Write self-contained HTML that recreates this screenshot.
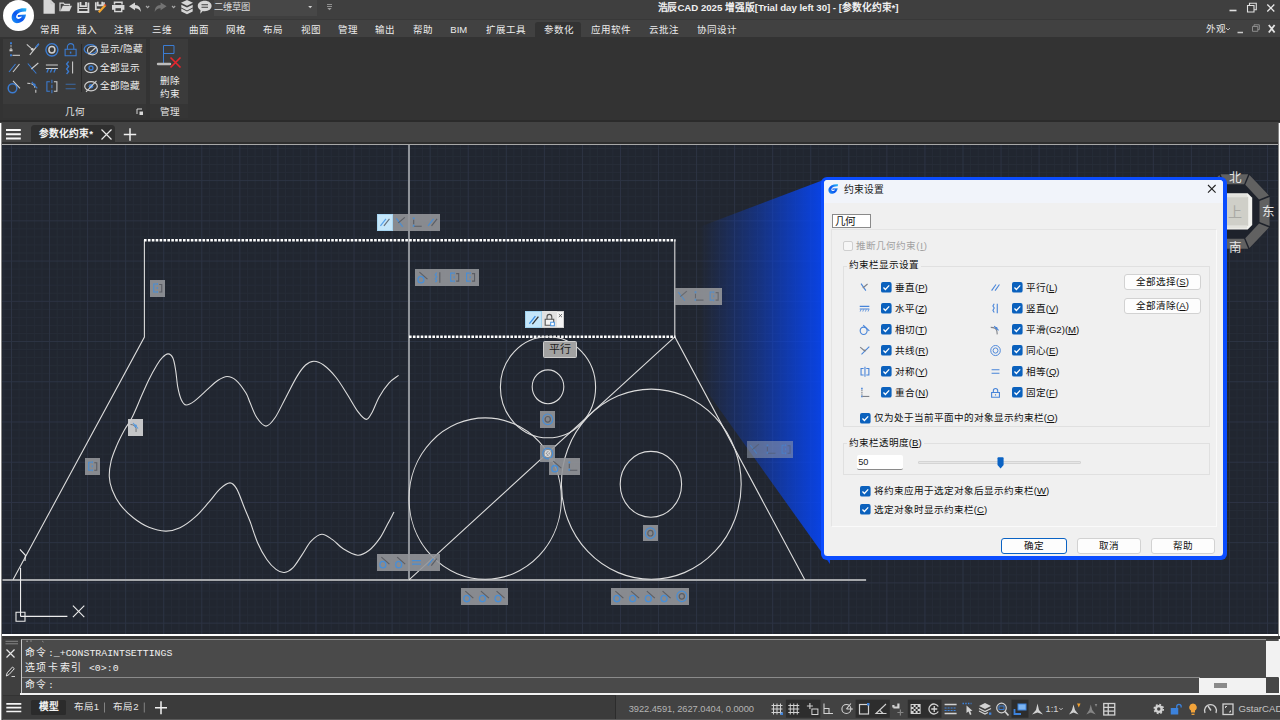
<!DOCTYPE html>
<html lang="zh-CN"><head><meta charset="utf-8"><title>GstarCAD</title>
<style>
*{box-sizing:border-box;margin:0;padding:0}
html,body{width:1280px;height:720px;overflow:hidden;background:#3f3f3f}
body{position:relative;font-family:"Liberation Sans",sans-serif;font-size:9.6px;color:#e6e6e6}
.a{position:absolute}
.t{position:absolute;white-space:nowrap;line-height:12px;height:12px}
svg{position:absolute;overflow:visible}
#title{left:0;top:0;width:1280px;height:19px;background:#3f3f3f}
#tabs{left:0;top:19px;width:1280px;height:18px;background:#414141;border-top:1px solid #383838}
#ribbon{left:0;top:37px;width:1280px;height:84px;background:#333}
#rline{left:0;top:120px;width:1280px;height:2px;background:#2b2b2b}
#doctabs{left:0;top:122px;width:1280px;height:20px;background:#434343}
#dline{left:0;top:142px;width:1280px;height:2px;background:#2e2e2e}
#dline2{left:0;top:143.8px;width:1280px;height:1.4px;background:#a8a8a8}
#canvas{left:2px;top:145px;width:1277px;height:489.2px;background-color:#212630;overflow:hidden}
#lstripe{left:0;top:123px;width:2px;height:597px;background:linear-gradient(to right,#fff 0,#fff 1px,#858585 1px,#858585 2px)}
#rstripe{left:1278px;top:123px;width:2px;height:572px;background:linear-gradient(to right,#858585 0,#858585 1px,#fff 1px,#fff 2px)}
#cline{left:0;top:634px;width:1280px;height:2.2px;background:#fff}
#cmd{left:2.5px;top:636.2px;width:1277.5px;height:59px;background:#4a4a4a}
#status{left:2.5px;top:695px;width:1277.5px;height:25px;background:#424242}
.bd{position:absolute;background:rgba(160,163,168,.82)}
</style></head><body>
<div class="a" id="title"></div>
<div class="a" id="tabs"></div>
<div class="a" id="ribbon"></div>
<div class="a" id="rline"></div>
<div class="a" id="doctabs"></div>
<div class="a" id="dline"></div>
<div class="a" id="dline2"></div>
<div class="a" id="canvas"><svg width="1277" height="490" style="left:0;top:0">
<path d="M1.89 0V489.2M17.11 0V489.2M24.72 0V489.2M32.34 0V489.2M39.95 0V489.2M55.17 0V489.2M62.78 0V489.2M70.40 0V489.2M78.01 0V489.2M93.23 0V489.2M100.84 0V489.2M108.46 0V489.2M116.07 0V489.2M131.29 0V489.2M138.90 0V489.2M146.52 0V489.2M154.13 0V489.2M169.35 0V489.2M176.96 0V489.2M184.58 0V489.2M192.19 0V489.2M207.41 0V489.2M215.02 0V489.2M222.64 0V489.2M230.25 0V489.2M245.47 0V489.2M253.08 0V489.2M260.70 0V489.2M268.31 0V489.2M283.53 0V489.2M291.14 0V489.2M298.76 0V489.2M306.37 0V489.2M321.59 0V489.2M329.20 0V489.2M336.82 0V489.2M344.43 0V489.2M359.65 0V489.2M367.26 0V489.2M374.88 0V489.2M382.49 0V489.2M397.71 0V489.2M405.32 0V489.2M412.94 0V489.2M420.55 0V489.2M435.77 0V489.2M443.38 0V489.2M451.00 0V489.2M458.61 0V489.2M473.83 0V489.2M481.44 0V489.2M489.06 0V489.2M496.67 0V489.2M511.89 0V489.2M519.50 0V489.2M527.12 0V489.2M534.73 0V489.2M549.95 0V489.2M557.56 0V489.2M565.18 0V489.2M572.79 0V489.2M588.01 0V489.2M595.62 0V489.2M603.24 0V489.2M610.85 0V489.2M626.07 0V489.2M633.68 0V489.2M641.30 0V489.2M648.91 0V489.2M664.13 0V489.2M671.74 0V489.2M679.36 0V489.2M686.97 0V489.2M702.19 0V489.2M709.80 0V489.2M717.42 0V489.2M725.03 0V489.2M740.25 0V489.2M747.86 0V489.2M755.48 0V489.2M763.09 0V489.2M778.31 0V489.2M785.92 0V489.2M793.54 0V489.2M801.15 0V489.2M816.37 0V489.2M823.98 0V489.2M831.60 0V489.2M839.21 0V489.2M854.43 0V489.2M862.04 0V489.2M869.66 0V489.2M877.27 0V489.2M892.49 0V489.2M900.10 0V489.2M907.72 0V489.2M915.33 0V489.2M930.55 0V489.2M938.16 0V489.2M945.78 0V489.2M953.39 0V489.2M968.61 0V489.2M976.22 0V489.2M983.84 0V489.2M991.45 0V489.2M1006.67 0V489.2M1014.28 0V489.2M1021.90 0V489.2M1029.51 0V489.2M1044.73 0V489.2M1052.34 0V489.2M1059.96 0V489.2M1067.57 0V489.2M1082.79 0V489.2M1090.40 0V489.2M1098.02 0V489.2M1105.63 0V489.2M1120.85 0V489.2M1128.46 0V489.2M1136.08 0V489.2M1143.69 0V489.2M1158.91 0V489.2M1166.52 0V489.2M1174.14 0V489.2M1181.75 0V489.2M1196.97 0V489.2M1204.58 0V489.2M1212.20 0V489.2M1219.81 0V489.2M1235.03 0V489.2M1242.64 0V489.2M1250.26 0V489.2M1257.87 0V489.2M1273.09 0V489.2M0 3.42H1277M0 11.46H1277M0 19.51H1277M0 27.55H1277M0 43.65H1277M0 51.69H1277M0 59.74H1277M0 67.78H1277M0 83.88H1277M0 91.92H1277M0 99.97H1277M0 108.01H1277M0 124.11H1277M0 132.15H1277M0 140.20H1277M0 148.24H1277M0 164.34H1277M0 172.38H1277M0 180.43H1277M0 188.47H1277M0 204.57H1277M0 212.61H1277M0 220.66H1277M0 228.70H1277M0 244.80H1277M0 252.84H1277M0 260.89H1277M0 268.93H1277M0 285.03H1277M0 293.07H1277M0 301.12H1277M0 309.16H1277M0 325.26H1277M0 333.30H1277M0 341.35H1277M0 349.39H1277M0 365.49H1277M0 373.53H1277M0 381.58H1277M0 389.62H1277M0 405.72H1277M0 413.76H1277M0 421.81H1277M0 429.85H1277M0 445.95H1277M0 453.99H1277M0 462.04H1277M0 470.08H1277M0 486.18H1277" stroke="#262c37" stroke-width="1" fill="none"/>
<path d="M9.50 0V489.2M47.56 0V489.2M85.62 0V489.2M123.68 0V489.2M161.74 0V489.2M199.80 0V489.2M237.86 0V489.2M275.92 0V489.2M313.98 0V489.2M352.04 0V489.2M390.10 0V489.2M428.16 0V489.2M466.22 0V489.2M504.28 0V489.2M542.34 0V489.2M580.40 0V489.2M618.46 0V489.2M656.52 0V489.2M694.58 0V489.2M732.64 0V489.2M770.70 0V489.2M808.76 0V489.2M846.82 0V489.2M884.88 0V489.2M922.94 0V489.2M961.00 0V489.2M999.06 0V489.2M1037.12 0V489.2M1075.18 0V489.2M1113.24 0V489.2M1151.30 0V489.2M1189.36 0V489.2M1227.42 0V489.2M1265.48 0V489.2M0 35.60H1277M0 75.83H1277M0 116.06H1277M0 156.29H1277M0 196.52H1277M0 236.75H1277M0 276.98H1277M0 317.21H1277M0 357.44H1277M0 397.67H1277M0 437.90H1277M0 478.13H1277" stroke="#2d3444" stroke-width="1" fill="none"/>
</svg></div>
<svg width="1280" height="720" style="left:0;top:0" fill="none" stroke="#dcdcdc" stroke-width="1.1">
<path d="M409 145V579.900" stroke="#8f9399" stroke-width="2"/>
<path d="M2.500 580H866.100" stroke="#a6a8ab" stroke-width="1.900"/>
<path d="M144.400 240V337L13 579.800M674.800 240V336.800L804.800 579.800M409 579.800L674.800 336.800"/>
<path d="M144 240.200H675.500" stroke="#fff" stroke-width="2.400" stroke-dasharray="2.600 1.300"/>
<path d="M409 336.800H675.500" stroke="#fff" stroke-width="2.400" stroke-dasharray="2.600 1.300"/>
<ellipse cx="485.2" cy="498.6" rx="76.2" ry="80.7"/>
<ellipse cx="651.3" cy="484.2" rx="89.9" ry="95.1"/>
<ellipse cx="650.9" cy="484.3" rx="30.7" ry="32.9"/>
<ellipse cx="548" cy="387.3" rx="47.6" ry="50.5"/>
<ellipse cx="548" cy="386.800" rx="15.800" ry="16.900"/>
<path d="M398.6 375.4 C397.0 376.7 392.1 379.5 388.9 383.1 C385.7 386.7 382.0 392.0 379.2 396.9 C376.4 401.8 374.3 408.4 372.2 412.2 C370.1 415.9 368.7 419.4 366.4 419.4 C364.1 419.4 361.5 416.4 358.3 412.2 C355.1 408.0 350.9 400.0 347.2 394.2 C343.5 388.4 340.0 382.4 336.1 377.5 C332.2 372.6 327.3 367.7 323.6 365.0 C319.9 362.3 316.9 361.3 313.9 361.3 C310.9 361.3 308.4 362.5 305.6 365.0 C302.8 367.5 300.4 370.8 297.2 376.1 C293.9 381.4 289.8 389.9 286.1 396.9 C282.4 403.8 278.4 412.9 275.0 417.8 C271.6 422.7 269.0 426.1 266.0 426.1 C263.0 426.1 259.6 421.7 256.9 417.8 C254.2 413.9 251.8 406.7 250.0 402.5 C248.2 398.3 248.1 396.5 245.8 392.8 C243.5 389.1 239.2 383.0 236.1 380.3 C233.0 377.6 230.1 376.5 227.1 376.5 C224.1 376.5 221.2 378.3 218.1 380.3 C215.0 382.3 212.2 385.1 208.3 388.6 C204.4 392.1 198.1 398.4 194.4 401.1 C190.7 403.8 188.3 405.2 186.1 405.0 C183.9 404.8 182.7 402.7 181.3 399.7 C179.9 396.7 178.7 392.0 177.8 387.2 C176.9 382.4 176.5 375.5 175.7 370.6 C174.9 365.8 174.2 360.9 172.9 358.1 C171.6 355.3 169.8 354.0 168.1 353.9 C166.4 353.8 164.4 355.5 162.5 357.4 C160.6 359.2 159.2 361.2 156.9 365.0 C154.6 368.8 151.1 375.2 148.6 380.3 C146.1 385.4 144.5 389.4 141.7 395.6 C138.9 401.9 134.8 412.1 131.9 417.8 C129.0 423.5 126.9 425.4 124.4 430.0 C121.9 434.6 118.9 440.4 116.7 445.6 C114.5 450.8 112.3 455.9 111.1 461.1 C109.9 466.3 109.1 471.9 109.3 476.7 C109.5 481.5 110.4 485.4 112.2 490.0 C114.0 494.6 116.5 499.8 120.0 504.4 C123.5 509.0 128.5 514.0 133.3 517.8 C138.1 521.6 143.5 525.1 148.9 527.3 C154.3 529.5 160.4 531.0 165.6 531.1 C170.8 531.2 175.0 530.2 180.0 527.8 C185.0 525.4 190.8 521.0 195.6 516.7 C200.4 512.4 204.8 506.8 208.9 502.2 C213.0 497.6 216.5 492.1 220.0 488.9 C223.5 485.7 227.2 482.9 230.0 482.9 C232.8 482.9 234.3 484.8 236.7 488.9 C239.1 493.0 242.2 502.4 244.4 507.8 C246.6 513.2 247.8 515.5 250.0 521.3 C252.2 527.1 254.8 536.3 257.6 542.7 C260.4 549.1 263.7 555.0 266.8 559.5 C269.9 564.0 273.1 567.2 276.0 569.4 C278.9 571.6 281.6 572.8 284.4 572.5 C287.2 572.2 289.9 570.8 292.8 567.9 C295.7 565.0 298.9 559.4 302.0 554.9 C305.1 550.4 307.8 544.5 311.1 541.1 C314.4 537.7 318.2 534.5 321.8 534.2 C325.4 534.0 328.9 537.2 332.5 539.6 C336.1 542.0 339.0 546.2 343.2 548.8 C347.4 551.4 353.4 555.0 357.7 555.2 C362.0 555.5 365.5 553.1 369.2 550.3 C372.9 547.4 376.8 542.4 379.9 538.1 C382.9 533.8 385.1 528.6 387.5 524.3 C389.9 520.0 392.9 514.1 394.0 512.1"/>
<path d="M20.550 616.400V567.800M20.550 616.400H67.400M16 612.200h9v9h-9zM19.900 549.400L25.400 555.300L25 561M72.900 605.700L84.300 617.100M84.300 605.700L72.900 617.100" stroke="#ececec" stroke-width="1.100"/>
</svg>
<div class="a" style="left:690px;top:170px;width:140px;height:395px;background:linear-gradient(to right,rgba(6,70,250,0) 7%,rgba(6,70,250,.4) 50%,rgba(6,70,250,.87) 93%);clip-path:polygon(100% 7.5px,0 60.5px,0 198px,100% 394px)"></div>
<div class="bd" style="left:376.5px;top:214px;width:63.50px;height:17.25px;background:rgba(148,150,154,.9)"><div class="a" style="left:0;top:0;width:16.4px;height:100%;background:#c4e6fa;border:1px solid #a8d6f2"></div><svg width="63.50" height="17.25" style="left:0;top:0" fill="none" stroke-width="1.1" opacity="0.8"><g transform="translate(-0.06 0.32)"><path d="M3.5 11.5L9 4.5" stroke="#3a8fe6"/><path d="M7 11.5L12.5 4.5" stroke="#50535a"/></g><g transform="translate(15.81 0.32)"><path d="M3.5 4L10 12.5" stroke="#3a8fe6"/><path d="M12 3L5.5 8.5" stroke="#50535a"/></g><g transform="translate(31.69 0.32)"><path d="M5 3.2V5M5 10.5V12.5" stroke="#3a8fe6" stroke-width="1.8"/><path d="M5 5.5V10M5.5 12H13" stroke="#50535a"/></g><g transform="translate(47.56 0.32)"><path d="M3.5 11.5L9 4.5" stroke="#3a8fe6"/><path d="M7 11.5L12.5 4.5" stroke="#50535a"/></g></svg></div>
<div class="bd" style="left:149.8px;top:280px;width:15.50px;height:16.70px;background:rgba(148,150,154,.9)"><svg width="15.50" height="16.70" style="left:0;top:0" fill="none" stroke-width="1.1" opacity="0.8"><g transform="translate(-0.25 0.05)"><path d="M6.5 4H4V12H6.5M7.5 3V5M7.5 7V9M7.5 11V13" stroke="#3a8fe6"/><path d="M9.5 4.5H12V12H9.5" stroke="#50535a"/></g></svg></div>
<div class="bd" style="left:415.25px;top:269.4px;width:63.50px;height:16.85px;background:rgba(148,150,154,.9)"><svg width="63.50" height="16.85" style="left:0;top:0" fill="none" stroke-width="1.1" opacity="0.8"><g transform="translate(-0.06 0.13)"><ellipse cx="6" cy="10.5" rx="3" ry="3.2" stroke="#3a8fe6" stroke-width="1.3"/><path d="M4.5 3L12.5 10" stroke="#50535a"/></g><g transform="translate(15.81 0.13)"><path d="M6 3.5L4.5 5.5L6 7.5L4.5 9.5L6 11.5L4.5 13" stroke="#3a8fe6"/><path d="M9 3V13.5" stroke="#50535a"/></g><g transform="translate(31.69 0.13)"><path d="M6.5 4H4V12H6.5M7.5 3V5M7.5 7V9M7.5 11V13" stroke="#3a8fe6"/><path d="M9.5 4.5H12V12H9.5" stroke="#50535a"/></g><g transform="translate(47.56 0.13)"><path d="M6.5 4H4V12H6.5M7.5 3V5M7.5 7V9M7.5 11V13" stroke="#3a8fe6"/><path d="M9.5 4.5H12V12H9.5" stroke="#50535a"/></g></svg></div>
<div class="bd" style="left:675px;top:288.4px;width:47.00px;height:16.90px;background:rgba(148,150,154,.9)"><svg width="47.00" height="16.90" style="left:0;top:0" fill="none" stroke-width="1.1" opacity="0.6"><g transform="translate(-0.17 0.15)"><path d="M3.5 4L10 12.5" stroke="#3a8fe6"/><path d="M12 3L5.5 8.5" stroke="#50535a"/></g><g transform="translate(15.50 0.15)"><path d="M5 3.2V5M5 10.5V12.5" stroke="#3a8fe6" stroke-width="1.8"/><path d="M5 5.5V10M5.5 12H13" stroke="#50535a"/></g><g transform="translate(31.17 0.15)"><path d="M6.5 4H4V12H6.5M7.5 3V5M7.5 7V9M7.5 11V13" stroke="#3a8fe6"/><path d="M9.5 4.5H12V12H9.5" stroke="#50535a"/></g></svg></div>
<div class="bd" style="left:128.2px;top:419px;width:15.10px;height:16.60px;background:rgba(205,206,208,.95)"><svg width="15.10" height="16.60" style="left:0;top:0" fill="none" stroke-width="1.1" opacity="0.8"><g transform="translate(-0.45 0.00)"><path d="M3 5.5C6 5.5 8 7 8.5 9.5L8.5 13" stroke="#50535a" stroke-width=".9"/><path d="M5.5 4L10.5 9.5" stroke="#3a8fe6"/><circle cx="8" cy="7" r="1.4" fill="#3a8fe6" stroke="none"/></g></svg></div>
<div class="bd" style="left:84.5px;top:457.6px;width:15.50px;height:17.00px;background:rgba(148,150,154,.9)"><svg width="15.50" height="17.00" style="left:0;top:0" fill="none" stroke-width="1.1" opacity="0.8"><g transform="translate(-0.25 0.20)"><path d="M6.5 4H4V12H6.5M7.5 3V5M7.5 7V9M7.5 11V13" stroke="#3a8fe6"/><path d="M9.5 4.5H12V12H9.5" stroke="#50535a"/></g></svg></div>
<div class="bd" style="left:376.5px;top:554.4px;width:63.20px;height:16.90px;background:rgba(148,150,154,.9)"><svg width="63.20" height="16.90" style="left:0;top:0" fill="none" stroke-width="1.1" opacity="0.8"><g transform="translate(-0.10 0.15)"><ellipse cx="6" cy="10.5" rx="3" ry="3.2" stroke="#3a8fe6" stroke-width="1.3"/><path d="M4.5 3L12.5 10" stroke="#50535a"/></g><g transform="translate(15.70 0.15)"><ellipse cx="6" cy="10.5" rx="3" ry="3.2" stroke="#3a8fe6" stroke-width="1.3"/><path d="M4.5 3L12.5 10" stroke="#50535a"/></g><g transform="translate(31.50 0.15)"><path d="M3.5 6.5H12.5M3.5 10H12.5" stroke="#3a8fe6"/></g><g transform="translate(47.30 0.15)"><path d="M3.5 11.5L9 4.5" stroke="#3a8fe6"/><path d="M7 11.5L12.5 4.5" stroke="#50535a"/></g></svg></div>
<div class="bd" style="left:539.7px;top:411.4px;width:15.50px;height:16.60px;background:rgba(148,150,154,.9)"><svg width="15.50" height="16.60" style="left:0;top:0" fill="none" stroke-width="1.1" opacity="0.8"><g transform="translate(-0.25 0.00)"><ellipse cx="8" cy="8.3" rx="5" ry="5.3" stroke="#3a8fe6" stroke-width="1.2"/><ellipse cx="8" cy="8.3" rx="2.6" ry="2.8" stroke="#50535a" stroke-width="1.2"/></g></svg></div>
<div class="bd" style="left:539.7px;top:445px;width:15.50px;height:17.00px;background:rgba(148,150,154,.9)"><svg width="15.50" height="17.00" style="left:0;top:0" fill="none" stroke-width="1.1" opacity="0.8"><g transform="translate(-0.25 0.20)"><ellipse cx="8" cy="8.3" rx="5" ry="5.3" stroke="#3a8fe6" stroke-width="1.2"/><ellipse cx="8" cy="8.3" rx="2.6" ry="2.8" stroke="#eee" stroke-width="1.2"/><path d="M5.5 5.5L10.5 11M10.5 5.5L5.5 11" stroke="#eee" stroke-width="1"/></g></svg></div>
<div class="bd" style="left:548.7px;top:457.6px;width:31.10px;height:17.00px;background:rgba(148,150,154,.9)"><svg width="31.10" height="17.00" style="left:0;top:0" fill="none" stroke-width="1.1" opacity="0.8"><g transform="translate(-0.23 0.20)"><ellipse cx="6" cy="10.5" rx="3" ry="3.2" stroke="#3a8fe6" stroke-width="1.3"/><path d="M4.5 3L12.5 10" stroke="#50535a"/></g><g transform="translate(15.32 0.20)"><path d="M5 3.2V5M5 10.5V12.5" stroke="#3a8fe6" stroke-width="1.8"/><path d="M5 5.5V10M5.5 12H13" stroke="#50535a"/></g></svg></div>
<div class="bd" style="left:746.6px;top:440.6px;width:46.90px;height:17.00px;background:rgba(150,158,175,.55)"><svg width="46.90" height="17.00" style="left:0;top:0" fill="none" stroke-width="1.1" opacity="0.45"><g transform="translate(-0.18 0.20)"><path d="M3.5 4L10 12.5" stroke="#3a8fe6"/><path d="M12 3L5.5 8.5" stroke="#50535a"/></g><g transform="translate(15.45 0.20)"><path d="M5 3.2V5M5 10.5V12.5" stroke="#3a8fe6" stroke-width="1.8"/><path d="M5 5.5V10M5.5 12H13" stroke="#50535a"/></g><g transform="translate(31.08 0.20)"><path d="M6.5 4H4V12H6.5M7.5 3V5M7.5 7V9M7.5 11V13" stroke="#3a8fe6"/><path d="M9.5 4.5H12V12H9.5" stroke="#50535a"/></g></svg></div>
<div class="bd" style="left:643px;top:525px;width:14.80px;height:16.40px;background:rgba(148,150,154,.9)"><svg width="14.80" height="16.40" style="left:0;top:0" fill="none" stroke-width="1.1" opacity="0.8"><g transform="translate(-0.60 -0.10)"><ellipse cx="8" cy="8.3" rx="5" ry="5.3" stroke="#3a8fe6" stroke-width="1.2"/><ellipse cx="8" cy="8.3" rx="2.6" ry="2.8" stroke="#50535a" stroke-width="1.2"/></g></svg></div>
<div class="bd" style="left:461.4px;top:588.3px;width:46.90px;height:16.70px;background:rgba(148,150,154,.9)"><svg width="46.90" height="16.70" style="left:0;top:0" fill="none" stroke-width="1.1" opacity="0.8"><g transform="translate(-0.18 0.05)"><ellipse cx="6" cy="10.5" rx="3" ry="3.2" stroke="#3a8fe6" stroke-width="1.3"/><path d="M4.5 3L12.5 10" stroke="#50535a"/></g><g transform="translate(15.45 0.05)"><ellipse cx="6" cy="10.5" rx="3" ry="3.2" stroke="#3a8fe6" stroke-width="1.3"/><path d="M4.5 3L12.5 10" stroke="#50535a"/></g><g transform="translate(31.08 0.05)"><ellipse cx="6" cy="10.5" rx="3" ry="3.2" stroke="#3a8fe6" stroke-width="1.3"/><path d="M4.5 3L12.5 10" stroke="#50535a"/></g></svg></div>
<div class="bd" style="left:610.8px;top:588.3px;width:78.70px;height:16.70px;background:rgba(148,150,154,.9)"><svg width="78.70" height="16.70" style="left:0;top:0" fill="none" stroke-width="1.1" opacity="0.8"><g transform="translate(-0.13 0.05)"><ellipse cx="6" cy="10.5" rx="3" ry="3.2" stroke="#3a8fe6" stroke-width="1.3"/><path d="M4.5 3L12.5 10" stroke="#50535a"/></g><g transform="translate(15.61 0.05)"><ellipse cx="6" cy="10.5" rx="3" ry="3.2" stroke="#3a8fe6" stroke-width="1.3"/><path d="M4.5 3L12.5 10" stroke="#50535a"/></g><g transform="translate(31.35 0.05)"><ellipse cx="6" cy="10.5" rx="3" ry="3.2" stroke="#3a8fe6" stroke-width="1.3"/><path d="M4.5 3L12.5 10" stroke="#50535a"/></g><g transform="translate(47.09 0.05)"><ellipse cx="6" cy="10.5" rx="3" ry="3.2" stroke="#3a8fe6" stroke-width="1.3"/><path d="M4.5 3L12.5 10" stroke="#50535a"/></g><g transform="translate(62.83 0.05)"><ellipse cx="8" cy="8.3" rx="5" ry="5.3" stroke="#3a8fe6" stroke-width="1.2"/><ellipse cx="8" cy="8.3" rx="2.6" ry="2.8" stroke="#50535a" stroke-width="1.2"/></g></svg></div>
<div class="a" style="left:525px;top:310.5px;width:38.8px;height:17.8px;background:#f4f4f4;border:1px solid #cfcfcf"></div>
<div class="a" style="left:525px;top:310.5px;width:16.8px;height:17.8px;background:#c4e6fa;border:1px solid #9fd2f0"></div>
<div class="a" style="left:541.8px;top:311.3px;width:15.7px;height:16.2px;background:#e2e2e2"></div>
<svg width="40" height="18" style="left:525px;top:310.5px" fill="none" stroke-width="1.1"><g transform="translate(.4 .6)"><path d="M4 12L10 4.5" stroke="#3a8fe6" stroke-width="1.3"/><path d="M7 12.5L13 5" stroke="#333" stroke-width="1.3"/></g><g transform="translate(16.2 .2)"><path d="M4 8H12.5V14H4z" stroke="#555" fill="#f4f4f4"/><path d="M5.8 8V5.8a2.4 2.6 0 0 1 4.8 0V8" stroke="#555"/><rect x="9.5" y="11" width="3.6" height="3.6" fill="#fff" stroke="#3a8fe6" stroke-width=".9"/></g><path d="M33.8 3L37 6.2M37 3L33.8 6.2" stroke="#555" stroke-width=".8"/></svg>
<div class="a" style="left:543.3px;top:341.3px;width:33.8px;height:16.8px;background:#a2a2a2;border:1px solid #cdcdcd;border-radius:1.5px;color:#1c1c1c;font-size:11px;line-height:14.5px;text-align:center;letter-spacing:.3px">平行</div>
<svg width="1280" height="720" style="left:0;top:0">
<polygon points="1219.7,174.0 1249.1,174.0 1269.9,196.0 1269.9,227.0 1249.1,249.0 1219.7,249.0 1198.9,227.0 1198.9,196.0" fill="#1e222b"/>
<polygon points="1220.6,174.3 1248.2,174.3 1244.1,184.2 1224.7,184.2" fill="#616161"/>
<polygon points="1249.5,174.9 1269.0,195.5 1259.0,199.6 1245.3,184.8" fill="#616161"/>
<polygon points="1269.6,196.9 1269.6,226.1 1259.5,222.0 1259.5,201.0" fill="#616161"/>
<polygon points="1269.0,227.5 1249.5,248.1 1245.3,238.2 1259.0,223.4" fill="#616161"/>
<polygon points="1248.2,248.7 1220.6,248.7 1224.7,238.8 1244.1,238.8" fill="#616161"/>
<polygon points="1219.3,248.1 1199.8,227.5 1209.8,223.4 1223.5,238.2" fill="#616161"/>
<polygon points="1199.2,226.1 1199.2,196.9 1209.3,201.0 1209.3,222.0" fill="#616161"/>
<polygon points="1199.8,195.5 1219.3,174.9 1223.5,184.8 1209.8,199.6" fill="#616161"/>
<path d="M1221 193.3H1247.7L1252.2 197.8V224.9L1247.7 229.4H1221z" fill="#f2f2ee"/>
<rect x="1221" y="196.8" width="27.200000000000045" height="29.099999999999994" fill="#cfcfc8"/>
<rect x="1221" y="194.3" width="26.200000000000045" height="3" fill="#e2e2dc"/>
<rect x="1221" y="225.4" width="26.200000000000045" height="3" fill="#e2e2dc"/>
</svg>
<div class="t" style="left:1228.500px;top:171px;font-size:12.500px;color:#e4e4e4;line-height:14px;height:14px">北</div>
<div class="t" style="left:1261.500px;top:205px;font-size:12.500px;color:#e4e4e4;line-height:14px;height:14px">东</div>
<div class="t" style="left:1228.500px;top:240.500px;font-size:12.500px;color:#e4e4e4;line-height:14px;height:14px">南</div>
<div class="t" style="left:1227.500px;top:203.500px;font-size:14px;color:#a9a9a4;line-height:16px;height:16px">上</div>
<div class="a" id="dlg" style="left:820.8px;top:176.8px;width:406px;height:383.2px;background:#0b4dff;border-radius:6px"></div>
<div class="a" style="left:824.1px;top:180.4px;width:398.7px;height:375.9px;background:#f0f0f0;border-radius:3.5px"></div>
<div class="a" style="left:824.1px;top:180.4px;width:398.7px;height:22.6px;background:#f1f4fa;border-radius:3.5px 3.5px 0 0"></div>
<svg width="10.400" height="10.400" viewBox="0 0 32 32" style="left:828px;top:184.400px"><defs><linearGradient id="lg2" x1="0" y1="1" x2="1" y2="0"><stop offset="0" stop-color="#1d9bf5"/><stop offset=".45" stop-color="#0b52f0"/><stop offset="1" stop-color="#27c0f5"/></linearGradient></defs><path d="M31 1C20 -1 6 3 2 14C-1 24 6 32 15 30C24 28 29 21 30 13L14 14C13 16 13 18 15 18L22 17C20 21 15 23 12 21C7 17 13 6 30 7Z" fill="url(#lg2)"/></svg>
<div class="t" style="left:844.3px;top:183.700px;color:#1a1a1a;font-size:9.8px">约束设置</div>
<svg width="10" height="10" style="left:1207px;top:184.3px"><path d="M1 1L8.600 8.600M8.600 1L1 8.600" stroke="#222" stroke-width="1.1"/></svg>
<div class="a" style="left:831px;top:228.600px;width:385.600px;height:298px;background:#f0f0f0;border:1px solid;border-color:#e4e4e4 #fafafa #fafafa #e4e4e4"></div>
<div class="a" style="left:832px;top:214px;width:39.300px;height:14.200px;background:#fff;border:1px solid #8a8a8a"></div>
<div class="t" style="left:835.300px;top:215px;color:#111;font-size:10.500px">几何</div>
<div class="a" style="left:843.200px;top:241px;width:10px;height:10px;background:#f6f6f6;border:1px solid #cfcfcf;border-radius:2px"></div>
<div class="t" style="left:856.300px;top:240px;color:#a2a2a2">推断几何约束(<u style="letter-spacing:.8px;margin-left:.8px">I</u>)</div>
<div class="a" style="left:843px;top:265.700px;width:367.300px;height:161.600px;border:1px solid #e0e0e0"></div>
<div class="t" style="left:846.500px;top:258.600px;color:#111;background:#f0f0f0;padding:0 2px">约束栏显示设置</div>
<svg width="15" height="15" style="left:857.300px;top:279.8px" fill="none" stroke-width="1.250" opacity=".95"><g transform="translate(1 1) scale(.87)"><path d="M3.500 3L9 11" stroke="#3f7fd8"/><path d="M11 3.500L5.500 8" stroke="#7a7d85"/></g></svg>
<svg width="10.600" height="10.600" viewBox="0 0 12 12" style="left:881.4px;top:282.0px"><rect x="0" y="0" width="12" height="12" rx="2.200" fill="#0b61bd"/><path d="M2.800 6.200L5 8.500L9.300 3.800" stroke="#fff" stroke-width="1.400" fill="none"/></svg>
<div class="t" style="left:895px;top:281.6px;color:#111">垂直(<u>P</u>)</div>
<svg width="15" height="15" style="left:988px;top:279.8px" fill="none" stroke-width="1.250" opacity=".95"><g transform="translate(1 1) scale(.87)"><path d="M3 11L8 4" stroke="#3f7fd8"/><path d="M7 11L12 4" stroke="#3f7fd8"/></g></svg>
<svg width="10.600" height="10.600" viewBox="0 0 12 12" style="left:1012.1px;top:282.0px"><rect x="0" y="0" width="12" height="12" rx="2.200" fill="#0b61bd"/><path d="M2.800 6.200L5 8.500L9.300 3.800" stroke="#fff" stroke-width="1.400" fill="none"/></svg>
<div class="t" style="left:1025.700px;top:281.6px;color:#111">平行(<u>L</u>)</div>
<svg width="15" height="15" style="left:857.300px;top:300.8px" fill="none" stroke-width="1.250" opacity=".95"><g transform="translate(1 1) scale(.87)"><path d="M2 5H13M2 8H13" stroke="#3f7fd8"/><path d="M3.500 8.500L2.500 11M6.500 8.500L5.500 11M9.500 8.500L8.500 11M12.500 8.500L11.500 11" stroke="#3f7fd8" stroke-width=".9"/></g></svg>
<svg width="10.600" height="10.600" viewBox="0 0 12 12" style="left:881.4px;top:303.0px"><rect x="0" y="0" width="12" height="12" rx="2.200" fill="#0b61bd"/><path d="M2.800 6.200L5 8.500L9.300 3.800" stroke="#fff" stroke-width="1.400" fill="none"/></svg>
<div class="t" style="left:895px;top:302.6px;color:#111">水平(<u>Z</u>)</div>
<svg width="15" height="15" style="left:988px;top:300.8px" fill="none" stroke-width="1.250" opacity=".95"><g transform="translate(1 1) scale(.87)"><path d="M6 2L4.500 4.500L6 7L4.500 9.500L6 12" stroke="#3f7fd8"/><path d="M9.500 2V13" stroke="#3f7fd8"/></g></svg>
<svg width="10.600" height="10.600" viewBox="0 0 12 12" style="left:1012.1px;top:303.0px"><rect x="0" y="0" width="12" height="12" rx="2.200" fill="#0b61bd"/><path d="M2.800 6.200L5 8.500L9.300 3.800" stroke="#fff" stroke-width="1.400" fill="none"/></svg>
<div class="t" style="left:1025.700px;top:302.6px;color:#111">竖直(<u>V</u>)</div>
<svg width="15" height="15" style="left:857.300px;top:321.8px" fill="none" stroke-width="1.250" opacity=".95"><g transform="translate(1 1) scale(.87)"><ellipse cx="6.500" cy="9" rx="4" ry="4.200" stroke="#3f7fd8" stroke-width="1.300"/><path d="M6 2.500L13 9" stroke="#3f7fd8"/></g></svg>
<svg width="10.600" height="10.600" viewBox="0 0 12 12" style="left:881.4px;top:324.0px"><rect x="0" y="0" width="12" height="12" rx="2.200" fill="#0b61bd"/><path d="M2.800 6.200L5 8.500L9.300 3.800" stroke="#fff" stroke-width="1.400" fill="none"/></svg>
<div class="t" style="left:895px;top:323.6px;color:#111">相切(<u>T</u>)</div>
<svg width="15" height="15" style="left:988px;top:321.8px" fill="none" stroke-width="1.250" opacity=".95"><g transform="translate(1 1) scale(.87)"><path d="M2 5C6 5 8.500 6.500 9 9L9.500 13" stroke="#7a7d85"/><path d="M6 3.500L11 8.500" stroke="#3f7fd8"/><circle cx="8.500" cy="6" r="1.300" fill="#3f7fd8" stroke="none"/></g></svg>
<svg width="10.600" height="10.600" viewBox="0 0 12 12" style="left:1012.1px;top:324.0px"><rect x="0" y="0" width="12" height="12" rx="2.200" fill="#0b61bd"/><path d="M2.800 6.200L5 8.500L9.300 3.800" stroke="#fff" stroke-width="1.400" fill="none"/></svg>
<div class="t" style="left:1025.700px;top:323.6px;color:#111">平滑(G2)(<u>M</u>)</div>
<svg width="15" height="15" style="left:857.300px;top:342.8px" fill="none" stroke-width="1.250" opacity=".95"><g transform="translate(1 1) scale(.87)"><path d="M2.500 3.500L7 7.500" stroke="#7a7d85"/><path d="M13 3L4 12" stroke="#3f7fd8"/><circle cx="8" cy="7.500" r="1.200" fill="#7a7d85" stroke="none"/></g></svg>
<svg width="10.600" height="10.600" viewBox="0 0 12 12" style="left:881.4px;top:345.0px"><rect x="0" y="0" width="12" height="12" rx="2.200" fill="#0b61bd"/><path d="M2.800 6.200L5 8.500L9.300 3.800" stroke="#fff" stroke-width="1.400" fill="none"/></svg>
<div class="t" style="left:895px;top:344.6px;color:#111">共线(<u>R</u>)</div>
<svg width="15" height="15" style="left:988px;top:342.8px" fill="none" stroke-width="1.250" opacity=".95"><g transform="translate(1 1) scale(.87)"><ellipse cx="7.500" cy="7.500" rx="5.500" ry="5.800" stroke="#3f7fd8" stroke-width="1.100"/><ellipse cx="7.500" cy="7.500" rx="2.800" ry="3" stroke="#3f7fd8" stroke-width="1.100"/></g></svg>
<svg width="10.600" height="10.600" viewBox="0 0 12 12" style="left:1012.1px;top:345.0px"><rect x="0" y="0" width="12" height="12" rx="2.200" fill="#0b61bd"/><path d="M2.800 6.200L5 8.500L9.300 3.800" stroke="#fff" stroke-width="1.400" fill="none"/></svg>
<div class="t" style="left:1025.700px;top:344.6px;color:#111">同心(<u>E</u>)</div>
<svg width="15" height="15" style="left:857.300px;top:363.8px" fill="none" stroke-width="1.250" opacity=".95"><g transform="translate(1 1) scale(.87)"><path d="M6.500 4H3.500V11.500H6.500M8 2V13.500" stroke="#3f7fd8"/><path d="M9.500 4H12.500V11.500H9.500" stroke="#3f7fd8"/></g></svg>
<svg width="10.600" height="10.600" viewBox="0 0 12 12" style="left:881.4px;top:366.0px"><rect x="0" y="0" width="12" height="12" rx="2.200" fill="#0b61bd"/><path d="M2.800 6.200L5 8.500L9.300 3.800" stroke="#fff" stroke-width="1.400" fill="none"/></svg>
<div class="t" style="left:895px;top:365.6px;color:#111">对称(<u>Y</u>)</div>
<svg width="15" height="15" style="left:988px;top:363.8px" fill="none" stroke-width="1.250" opacity=".95"><g transform="translate(1 1) scale(.87)"><path d="M3 5.500H12M3 9.500H12" stroke="#3f7fd8"/></g></svg>
<svg width="10.600" height="10.600" viewBox="0 0 12 12" style="left:1012.1px;top:366.0px"><rect x="0" y="0" width="12" height="12" rx="2.200" fill="#0b61bd"/><path d="M2.800 6.200L5 8.500L9.300 3.800" stroke="#fff" stroke-width="1.400" fill="none"/></svg>
<div class="t" style="left:1025.700px;top:365.6px;color:#111">相等(<u>Q</u>)</div>
<svg width="15" height="15" style="left:857.300px;top:384.8px" fill="none" stroke-width="1.250" opacity=".95"><g transform="translate(1 1) scale(.87)"><path d="M4.500 2V4M4.500 11V13" stroke="#3f7fd8" stroke-width="1.800"/><path d="M4.500 4.500V10.500" stroke="#7a7d85" stroke-dasharray="1.500 1"/><path d="M5 12H13" stroke="#7a7d85"/></g></svg>
<svg width="10.600" height="10.600" viewBox="0 0 12 12" style="left:881.4px;top:387.0px"><rect x="0" y="0" width="12" height="12" rx="2.200" fill="#0b61bd"/><path d="M2.800 6.200L5 8.500L9.300 3.800" stroke="#fff" stroke-width="1.400" fill="none"/></svg>
<div class="t" style="left:895px;top:386.6px;color:#111">重合(<u>N</u>)</div>
<svg width="15" height="15" style="left:988px;top:384.8px" fill="none" stroke-width="1.250" opacity=".95"><g transform="translate(1 1) scale(.87)"><path d="M3 7.500H12V13H3z" stroke="#3f7fd8"/><path d="M5 7.500V5.500a2.500 2.600 0 0 1 5 0V7.500M7.500 9.500V11" stroke="#3f7fd8"/></g></svg>
<svg width="10.600" height="10.600" viewBox="0 0 12 12" style="left:1012.1px;top:387.0px"><rect x="0" y="0" width="12" height="12" rx="2.200" fill="#0b61bd"/><path d="M2.800 6.200L5 8.500L9.300 3.800" stroke="#fff" stroke-width="1.400" fill="none"/></svg>
<div class="t" style="left:1025.700px;top:386.6px;color:#111">固定(<u>F</u>)</div>
<svg width="10.600" height="10.600" viewBox="0 0 12 12" style="left:860px;top:412.7px"><rect x="0" y="0" width="12" height="12" rx="2.200" fill="#0b61bd"/><path d="M2.800 6.200L5 8.500L9.300 3.800" stroke="#fff" stroke-width="1.400" fill="none"/></svg>
<div class="t" style="left:873.800px;top:412.300px;color:#111">仅为处于当前平面中的对象显示约束栏(<u>O</u>)</div>
<div class="a" style="left:1123.7px;top:274px;width:77.6px;height:16px;background:#fdfdfd;border:1px solid #d2d2d2;border-radius:3px;color:#111;text-align:center;line-height:14.5px">全部选择(<u>S</u>)</div>
<div class="a" style="left:1123.7px;top:298px;width:77.6px;height:16.4px;background:#fdfdfd;border:1px solid #d2d2d2;border-radius:3px;color:#111;text-align:center;line-height:14.5px">全部清除(<u>A</u>)</div>
<div class="a" style="left:843px;top:442.700px;width:367.300px;height:32.800px;border:1px solid #e0e0e0"></div>
<div class="t" style="left:846.800px;top:436.500px;color:#111;background:#f0f0f0;padding:0 2px">约束栏透明度(<u>B</u>)</div>
<div class="a" style="left:856.700px;top:454.800px;width:46.200px;height:14.800px;background:#fff;border-bottom:1px solid #8a8a8a;border-radius:2px;color:#222;font-size:9.200px;line-height:14px;padding-left:1.500px">50</div>
<div class="a" style="left:918.300px;top:460.700px;width:163px;height:3.200px;background:#e6e6e6;border:1px solid #d4d4d4;border-radius:1px"></div>
<svg width="8" height="13" style="left:996.700px;top:457.200px"><path d="M.5 1.200Q.5.300 1.400.300H5.700Q6.600.300 6.600 1.200V8L3.550 11.600L.5 8z" fill="#0b63c4"/></svg>
<svg width="10.600" height="10.600" viewBox="0 0 12 12" style="left:860px;top:485.6px"><rect x="0" y="0" width="12" height="12" rx="2.200" fill="#0b61bd"/><path d="M2.800 6.200L5 8.500L9.300 3.800" stroke="#fff" stroke-width="1.400" fill="none"/></svg>
<div class="t" style="left:873.800px;top:485.200px;color:#111">将约束应用于选定对象后显示约束栏(<u>W</u>)</div>
<svg width="10.600" height="10.600" viewBox="0 0 12 12" style="left:860px;top:504px"><rect x="0" y="0" width="12" height="12" rx="2.200" fill="#0b61bd"/><path d="M2.800 6.200L5 8.500L9.300 3.800" stroke="#fff" stroke-width="1.400" fill="none"/></svg>
<div class="t" style="left:873.800px;top:503.600px;color:#111">选定对象时显示约束栏(<u>C</u>)</div>
<div class="a" style="left:1001.4px;top:537.5px;width:65.2px;height:16.2px;background:#fdfdfd;border:1px solid #0b63c4;border-radius:3px;color:#111;text-align:center;line-height:14.5px">确定</div>
<div class="a" style="left:1076.5px;top:537.5px;width:64.3px;height:16.2px;background:#fdfdfd;border:1px solid #d2d2d2;border-radius:3px;color:#111;text-align:center;line-height:14.5px">取消</div>
<div class="a" style="left:1150.7px;top:537.5px;width:64.7px;height:16.2px;background:#fdfdfd;border:1px solid #d2d2d2;border-radius:3px;color:#111;text-align:center;line-height:14.5px">帮助</div>
<div class="a" id="cline"></div>
<div class="a" id="cmd"></div>
<div class="a" id="status"></div>
<div class="a" id="lstripe"></div>
<div class="a" id="rstripe"></div>
<div class="a" style="left:3.100px;top:-0.300px;width:31px;height:31px;border-radius:50%;background:#fff"></div>
<svg width="16" height="16" viewBox="0 0 32 32" style="left:10.800px;top:7.600px"><defs><linearGradient id="lg" x1="0" y1="1" x2="1" y2="0"><stop offset="0" stop-color="#1d9bf5"/><stop offset=".45" stop-color="#0b52f0"/><stop offset="1" stop-color="#27c0f5"/></linearGradient></defs><path d="M31 1C20 -1 6 3 2 14C-1 24 6 32 15 30C24 28 29 21 30 13L14 14C13 16 13 18 15 18L22 17C20 21 15 23 12 21C7 17 13 6 30 7Z" fill="url(#lg)"/></svg>
<svg width="230" height="20" style="left:0;top:0" fill="none"><path d="M43.500 0H51L54.800 3.800V13.800H43.500z" fill="#d6d6d6"/><path d="M51 0V3.800H54.800" stroke="#bdbdbd" stroke-width=".6"/><path d="M60 11.200V3.200H63.500L64.500 4.300H69.500V5.600" stroke="#d6d6d6" stroke-width="1.200"/><path d="M60.300 11.200L62.800 5.800H72L69.500 11.200z" fill="#d6d6d6"/><path d="M78.200 2.500V12H88.400V2.500M80.500 2V6.200H86V2" stroke="#d6d6d6" stroke-width="1.800"/><path d="M79 8.500H88" stroke="#d6d6d6" stroke-width="1"/><path d="M95.800 2.200V9.500H100M104 6V2.200M97.800 1.800V5.300H102.200V1.800" stroke="#d6d6d6" stroke-width="1.700"/><path d="M98.800 12.200L105.300 5.200" stroke="#f3a52e" stroke-width="2.200"/><path d="M104.600 4.500l1.400 1.300" stroke="#e0442e" stroke-width="1.500"/><path d="M114.500 4.500V2.200H122V4.500" stroke="#d6d6d6" stroke-width="1.500"/><rect x="112" y="5" width="12.400" height="4.800" fill="#d6d6d6"/><path d="M114.800 8.500V11.500H121.700V8.500" stroke="#d6d6d6" stroke-width="1.500"/><rect x="115.500" y="8.200" width="5.500" height="2.300" fill="#3f3f3f"/><path d="M129 6.300L135 2.600V5C139 5 141 8 140.800 12C139.500 9.500 138 8.300 135 8.300V10.200z" fill="#d6d6d6"/><path d="M146 6L147.600 7.600L149.200 6" stroke="#a8a8a8" stroke-width="1.100"/><path d="M166.600 6.300L160.600 2.600V5C156.600 5 154.600 8 154.800 12C156.100 9.500 157.600 8.300 160.600 8.300V10.200z" fill="#737373"/><path d="M172 6L173.600 7.600L175.200 6" stroke="#a8a8a8" stroke-width="1.100"/><path d="M187 0L193 2.800L187 5.800L181 2.800z" fill="#d6d6d6"/><path d="M181.300 4.800L187 7.600L192.700 4.800V7.600L187 10.400L181.300 7.600z" fill="#d6d6d6"/><path d="M181.300 8.600L187 11.400L192.700 8.600V11.400L187 14.200L181.300 11.400z" fill="#d6d6d6"/><path d="M204.700 .8C208.600 .8 211.600 3 211.600 6C211.600 9 208.600 11.200 204.700 11.200C204 11.200 203.300 11.100 202.700 11L200.300 13.800L200.500 10.200C198.800 9.200 197.800 7.700 197.800 6C197.800 3 200.800 .8 204.700 .8z" fill="#d6d6d6"/><path d="M201.500 4.800H208M201.500 7.300H208" stroke="#3f3f3f" stroke-width="1.100"/></svg>
<div class="a" style="left:213.500px;top:0;width:103.500px;height:16px;background:#474747"></div>
<div class="t" style="left:213.600px;top:1.400px;font-size:9.300px;color:#dcdcdc">二维草图</div>
<svg width="20" height="14" style="left:300px;top:0"><path d="M8.200 6L10.200 8.200L12.200 6z" fill="#cfcfcf"/></svg>
<svg width="10" height="10" style="left:325px;top:3px"><path d="M2 1.500H7M2 3.500H7" stroke="#9a9a9a" stroke-width=".9"/><path d="M2.300 5L4.500 7.300L6.700 5z" fill="#9a9a9a"/></svg>
<div class="t" style="left:657.500px;top:2.200px;font-size:9.700px;font-weight:bold;color:#f0f0f0;letter-spacing:-.05px">浩辰CAD 2025 增强版[Trial day left 30] - [参数化约束*]</div>
<svg width="60" height="38" style="left:1220px;top:0" fill="none"><path d="M9.500 10.500H16.500" stroke="#e0e0e0" stroke-width="1.600"/><path d="M27.500 5.500H34V12H27.500zM29.500 5.500V3.200H36.300V9.800H34" stroke="#e0e0e0" stroke-width="1.100"/><path d="M47.300 4.500L54.300 11.500M54.300 4.500L47.300 11.500" stroke="#e8e8e8" stroke-width="1.300"/><path d="M17.500 32.500H23" stroke="#c8c8c8" stroke-width="1.500"/><path d="M32.500 26.500H37.800V31.300H32.500zM34 26.500V24.800H39.300V29.600H37.800" stroke="#8c8c8c" stroke-width="1"/><path d="M48.800 25L54.600 32.500M54.600 25L48.800 32.500" stroke="#e4e4e4" stroke-width="1.800"/></svg>
<div class="t" style="left:1205.600px;top:23.300px;font-size:9.600px;color:#e8e8e8">外观</div>
<svg width="8" height="6" style="left:1225px;top:26.500px"><path d="M1 1L3 3L5 1" stroke="#bdbdbd" stroke-width="1" fill="none"/></svg>
<div class="a" style="left:535px;top:22px;width:45.500px;height:15px;background:#333;border-radius:2.500px 2.500px 0 0"></div>
<div class="t" style="left:39.8px;top:24.100px;font-size:9.500px;color:#ececec">常用</div>
<div class="t" style="left:76.8px;top:24.100px;font-size:9.500px;color:#ececec">插入</div>
<div class="t" style="left:114.3px;top:24.100px;font-size:9.500px;color:#ececec">注释</div>
<div class="t" style="left:151.8px;top:24.100px;font-size:9.500px;color:#ececec">三维</div>
<div class="t" style="left:188.8px;top:24.100px;font-size:9.500px;color:#ececec">曲面</div>
<div class="t" style="left:226.3px;top:24.100px;font-size:9.500px;color:#ececec">网格</div>
<div class="t" style="left:263.3px;top:24.100px;font-size:9.500px;color:#ececec">布局</div>
<div class="t" style="left:300.8px;top:24.100px;font-size:9.500px;color:#ececec">视图</div>
<div class="t" style="left:337.8px;top:24.100px;font-size:9.500px;color:#ececec">管理</div>
<div class="t" style="left:375.3px;top:24.100px;font-size:9.500px;color:#ececec">输出</div>
<div class="t" style="left:412.8px;top:24.100px;font-size:9.500px;color:#ececec">帮助</div>
<div class="t" style="left:450.3px;top:24.100px;font-size:9.500px;color:#ececec">BIM</div>
<div class="t" style="left:486.3px;top:24.100px;font-size:9.500px;color:#ececec">扩展工具</div>
<div class="t" style="left:544.3px;top:24.100px;font-size:9.500px;color:#ececec">参数化</div>
<div class="t" style="left:591.3px;top:24.100px;font-size:9.500px;color:#ececec">应用软件</div>
<div class="t" style="left:649.3px;top:24.100px;font-size:9.500px;color:#ececec">云批注</div>
<div class="t" style="left:697.3px;top:24.100px;font-size:9.500px;color:#ececec">协同设计</div>
<div class="a" style="left:3.100px;top:39.400px;width:143px;height:78.600px;background:#3b3b3b"></div>
<div class="a" style="left:3.100px;top:104px;width:143px;height:14px;background:#353535"></div>
<div class="a" style="left:150px;top:39.400px;width:38.300px;height:78.600px;background:#3b3b3b"></div>
<div class="a" style="left:150px;top:104px;width:38.300px;height:14px;background:#353535"></div>
<div class="a" style="left:81px;top:43.800px;width:.9px;height:48px;background:#2a2a2a"></div>
<div class="t" style="left:65px;top:105.800px;font-size:9.600px;color:#e4e4e4">几何</div>
<div class="t" style="left:159.500px;top:105.800px;font-size:9.600px;color:#e4e4e4">管理</div>
<svg width="8" height="8" style="left:135.500px;top:108px" fill="none"><path d="M1 6V1H6" stroke="#d8d8d8" stroke-width="1"/><path d="M3.500 3.500H7V7H3.500z" fill="#d8d8d8"/></svg>
<div class="t" style="left:100px;top:43.300px;font-size:9.650px;color:#ececec">显示/隐藏</div>
<div class="t" style="left:100px;top:61.800px;font-size:9.650px;color:#ececec">全部显示</div>
<div class="t" style="left:100px;top:80.200px;font-size:9.650px;color:#ececec">全部隐藏</div>
<div class="t" style="left:159.500px;top:75px;font-size:9.600px;color:#ececec">删除</div>
<div class="t" style="left:159.500px;top:88.300px;font-size:9.600px;color:#ececec">约束</div>
<svg width="200" height="90" style="left:0;top:36px" fill="none" stroke-width="1.050"><g transform="translate(6.0 5.8)"><path d="M5 .5V2.500M5 12.500V14.500" stroke="#3b7cd2" stroke-width="2"/><path d="M5 3.500V8" stroke="#cfcfcf" stroke-dasharray="1.500 1"/><path d="M3.500 8.500H6.500" stroke="#cfcfcf" stroke-width="2"/><path d="M6.500 13.500H14" stroke="#cfcfcf"/></g><g transform="translate(24.8 5.8)"><path d="M2 2.500L7 7" stroke="#cfcfcf"/><path d="M14 2L5 13" stroke="#cfcfcf"/><path d="M14 2L11 5.600" stroke="#3b7cd2" stroke-width="1.500"/><circle cx="7.500" cy="7.500" r="1.400" fill="#cfcfcf"/></g><g transform="translate(43.9 5.8)"><ellipse cx="8" cy="8" rx="6" ry="6.200" stroke="#3b7cd2" stroke-width="1.400"/><ellipse cx="8" cy="8" rx="3" ry="3.200" stroke="#cfcfcf" stroke-width="1.500"/></g><g transform="translate(62.6 5.8)"><path d="M2.500 7.500H13.500V14H2.500z" stroke="#3b7cd2"/><path d="M4.800 7.500V5A3.200 3.200 0 0 1 11.200 5V7.500" stroke="#3b7cd2"/><path d="M8 9.800V11.800" stroke="#3b7cd2" stroke-width="1.500"/></g><g transform="translate(6.0 24.0)"><path d="M3 12L9.500 4" stroke="#3b7cd2"/><path d="M7 12L13.500 4" stroke="#cfcfcf"/></g><g transform="translate(24.8 24.0)"><path d="M3 3.500L11.500 13.500" stroke="#3b7cd2"/><path d="M13.500 3L6.500 9" stroke="#cfcfcf"/></g><g transform="translate(43.9 24.0)"><path d="M2 5H14M2 8.500H14" stroke="#cfcfcf"/><path d="M4.500 9L3 12.500M8 9L6.500 12.500M11.500 9L10 12.500" stroke="#3b7cd2" stroke-width="1.300"/></g><g transform="translate(62.6 24.0)"><path d="M6 1.500L4 4L6 6.500L4 9L6 11.500L4 14" stroke="#3b7cd2" stroke-width="1.300"/><path d="M10 1.500V13.500" stroke="#cfcfcf"/></g><g transform="translate(6.0 42.3)"><ellipse cx="6.500" cy="10" rx="4.300" ry="4.500" stroke="#3b7cd2" stroke-width="1.500"/><path d="M7 2.500L14 10" stroke="#cfcfcf"/></g><g transform="translate(24.8 42.3)"><path d="M2.500 5C6 5 9.500 6 10 9L10 9.500M11 11.500V14.500" stroke="#cfcfcf" stroke-dasharray="3 1"/><path d="M7 3.500L12.500 10" stroke="#3b7cd2"/><circle cx="9.500" cy="6.500" r="1.300" fill="#3b7cd2"/></g><g transform="translate(43.9 42.3)"><path d="M6 3.500H3V13H6" stroke="#3b7cd2"/><path d="M8 1.500V15" stroke="#3b7cd2" stroke-dasharray="3.500 1.500"/><path d="M10 3.500H13V13H10" stroke="#cfcfcf"/></g><g transform="translate(62.6 42.3)"><path d="M3 6H13M3 10.500H13" stroke="#3b7cd2" opacity=".7"/></g><ellipse cx="90.500" cy="13.25" rx="6.300" ry="4.600" stroke="#3b7cd2" stroke-width="1.300"/><ellipse cx="92.500" cy="14.55" rx="5" ry="4.300" stroke="#cfcfcf" stroke-width="1.100"/><path d="M88.500 18.25L96.500 10.75" stroke="#cfcfcf" stroke-width="1.100"/><ellipse cx="91" cy="32" rx="6.300" ry="4.600" stroke="#cfcfcf" stroke-width="1.200"/><circle cx="91" cy="32" r="2" stroke="#3b7cd2" stroke-width="1.400"/><ellipse cx="91" cy="50.3" rx="6.300" ry="4.600" stroke="#cfcfcf" stroke-width="1.200"/><circle cx="91" cy="50.3" r="2.300" fill="#3b7cd2"/><path d="M86 55.8L96.500 44.8" stroke="#cfcfcf" stroke-width="1.100"/><path d="M163.500 27V9.500H174V17.500H163.500" stroke="#3b7cd2" stroke-width="1"/><path d="M158 28H170" stroke="#bdbdbd" stroke-width="2.400" stroke-linecap="round"/><path d="M170.500 21.500L180.500 31.500M180.500 21.500L170.500 31.500" stroke="#e8262d" stroke-width="1.600"/></svg>
<div class="a" style="left:31.200px;top:125px;width:84px;height:17.500px;background:#2f2f2f;border-radius:3.500px 3.500px 0 0"></div>
<svg width="140" height="22" style="left:0;top:122px" fill="none"><path d="M6 8H20.800M6 12.300H20.800M6 16.500H20.800" stroke="#f6f6f6" stroke-width="1.900"/><path d="M101.500 7.500L111.500 17.500M111.500 7.500L101.500 17.500" stroke="#e8e8e8" stroke-width="1.200"/><path d="M123.800 12.500H136.200M130 6.300V18.700" stroke="#f0f0f0" stroke-width="1.500"/></svg>
<div class="t" style="left:39.300px;top:128.300px;font-size:9.700px;font-weight:bold;color:#f2f2f2">参数化约束*</div>
<div class="a" style="left:2.500px;top:636.200px;width:18px;height:58.800px;background:#3f3f3f"></div>
<svg width="22" height="60" style="left:0;top:636px" fill="none"><path d="M5.500 5.300H18M5.500 7.800H18" stroke="#8e8e8e" stroke-width=".9"/><path d="M6.500 13.500L14.500 21.500M14.500 13.500L6.500 21.500" stroke="#e6e6e6" stroke-width="1.200"/><path d="M6.300 40L7.200 36.800L12.500 31L14.300 32.700L9 38.600z" stroke="#dedede" stroke-width="1"/><path d="M11.500 40.500H15" stroke="#dedede" stroke-width=".9"/></svg>
<div class="a" style="left:2.500px;top:636.200px;width:1277.500px;height:3.300px;background:#363636"></div>
<div class="a" style="left:20.600px;top:639.400px;width:1245px;height:55.300px;border:1.200px solid #c9c9c9;border-top:1px solid #929292;border-right:none;background:#4a4a4a"></div>
<div class="a" style="left:21.500px;top:677.200px;width:1178px;height:1px;background:#8b8b8b"></div>
<div class="t" style="left:24.500px;top:647.600px;font-family:'Liberation Mono',monospace;font-size:9.900px;color:#f0f0f0;letter-spacing:0"><span style="letter-spacing:1.700px">命令</span>:_+CONSTRAINTSETTINGS</div>
<div class="t" style="left:24.500px;top:663.200px;font-family:'Liberation Mono',monospace;font-size:9.900px;color:#f0f0f0;letter-spacing:0"><span style="letter-spacing:1.700px">选项卡索引</span> &lt;0&gt;:0</div>
<div class="t" style="left:24.500px;top:679.500px;font-family:'Liberation Mono',monospace;font-size:9.900px;color:#f0f0f0;letter-spacing:0"><span style="letter-spacing:1.700px">命令</span>:</div>
<svg width="30" height="3" style="left:24px;top:640.300px"><path d="M2.500 1.200h1.200M6.500 1h1M18.500 1.300l.8 .6" stroke="#cfcfcf" stroke-width=".9" fill="none"/></svg>
<div class="a" style="left:1266px;top:640.800px;width:14px;height:36px;background:#f2f2f2"></div>
<div class="a" style="left:1266px;top:677.800px;width:13px;height:15px;background:#474747"></div>
<div class="a" style="left:1199.300px;top:677.800px;width:66.500px;height:15.500px;background:#f2f2f2"></div>
<div class="a" style="left:1213.800px;top:683.300px;width:13.200px;height:4.700px;background:#8a8a8a"></div>
<div class="a" style="left:20px;top:692.900px;width:1260px;height:2.100px;background:#f2f2f2"></div>
<div class="a" style="left:2.500px;top:718.700px;width:1277.500px;height:1.300px;background:#5a5a5a"></div>
<div class="a" style="left:2.500px;top:695px;width:613.300px;height:24px;background:#3b3b3b;border-right:1.200px solid #2c2c2c;border-top:1.500px solid #333"></div>
<div class="a" style="left:31.200px;top:699.500px;width:35px;height:15.500px;background:#2b2b2b;border-radius:1.500px"></div>
<svg width="180" height="25" style="left:0;top:695px" fill="none"><path d="M6.300 8.800H21.300M6.300 12.600H21.300M6.300 16.500H21.300" stroke="#f4f4f4" stroke-width="1.700"/><path d="M104.500 7.500V17.500M144.300 7.500V17.500" stroke="#8a8a8a" stroke-width=".9"/><path d="M155 12.700H167M161 6.300V19.200" stroke="#f2f2f2" stroke-width="1.500"/></svg>
<div class="t" style="left:39.200px;top:701.300px;font-size:9.700px;font-weight:bold;color:#f2f2f2">模型</div>
<div class="t" style="left:73.700px;top:701.300px;font-size:9.500px;color:#e6e6e6">布局1</div>
<div class="t" style="left:113.200px;top:701.300px;font-size:9.500px;color:#e6e6e6">布局2</div>
<div class="t" style="left:628.700px;top:703px;font-size:9.300px;color:#b4b4b4;letter-spacing:-.05px">3922.4591, 2627.0404, 0.0000</div>
<svg width="1280" height="25" style="left:0;top:695.800px" fill="none" stroke-width="1.100"><rect x="785.9" y="3.700" width="34.5" height="18" fill="#2d2d2d"/><rect x="855.6" y="3.700" width="34.2" height="18" fill="#2d2d2d"/><rect x="907.8" y="3.700" width="33.7" height="18" fill="#2d2d2d"/><rect x="1011.5" y="3.700" width="17.0" height="18" fill="#2d2d2d"/><path d="M771.5 9.500H782.5M771.5 13H782.5M771.5 16.500H782.5M773.5 7.500V18.500M777 7.500V18.500M780.5 7.500V18.500" stroke="#d2d2d2" stroke-width="1"/><rect x="780.5" y="16.500" width="2.500" height="2.500" fill="#3c82dc"/><path d="M788.25 9.500H799.25M788.25 13H799.25M788.25 16.500H799.25M790.25 7.500V18.500M793.75 7.500V18.500M797.25 7.500V18.500" stroke="#d2d2d2" stroke-width="1"/><path d="M806.9 10H812.9M809.9 7V13" stroke="#d2d2d2"/><rect x="811.9" y="13" width="6" height="5.500" stroke="#d2d2d2" stroke-width="1"/><path d="M824 7.500V17.500H833M824 12.500H829V17.500" stroke="#d2d2d2"/><circle cx="846.4" cy="13" r="4.500" stroke="#d2d2d2"/><path d="M846.4 13H852.9M846.4 13L850.9 7.500" stroke="#d2d2d2"/><rect x="859.5" y="8.500" width="9" height="9.500" stroke="#d2d2d2" stroke-width="1.200"/><rect x="867" y="7" width="2.500" height="2.500" fill="#3c82dc"/><path d="M886 8L876 17.500H886.5" stroke="#d2d2d2"/><path d="M880 14.500L883 17.500" stroke="#d2d2d2"/><path d="M893.4 11.500H898.4V7.500M893.4 11.500V9" stroke="#d2d2d2" stroke-width="2.200"/><path d="M900.4 13.500V19.500M897.4 16.500H903.4" stroke="#858585" stroke-width="1.200"/><rect x="910.6" y="8" width="10" height="10" fill="#d2d2d2"/><rect x="911.6" y="9" width="2" height="2" fill="#2c2c2c"/><rect x="911.6" y="13" width="2" height="2" fill="#2c2c2c"/><rect x="913.6" y="11" width="2" height="2" fill="#2c2c2c"/><rect x="913.6" y="15" width="2" height="2" fill="#2c2c2c"/><rect x="915.6" y="9" width="2" height="2" fill="#2c2c2c"/><rect x="915.6" y="13" width="2" height="2" fill="#2c2c2c"/><rect x="917.6" y="11" width="2" height="2" fill="#2c2c2c"/><rect x="917.6" y="15" width="2" height="2" fill="#2c2c2c"/><path d="M938.25 10.500A5 5 0 1 0 938.25 15.500" stroke="#d2d2d2" stroke-width="1.300"/><path d="M931.25 13H937.25M934.25 10V16" stroke="#d2d2d2" stroke-width="1.300"/><path d="M944.6 8.500H956.6M944.6 17.500H956.6" stroke="#d2d2d2" stroke-width="1.300"/><path d="M944.6 12H956.6M944.6 14.500H956.6" stroke="#3c82dc" stroke-width="1" stroke-dasharray="2 1"/><path d="M962.5 7.500H971.5" stroke="#3c82dc" stroke-width="1.300" stroke-dasharray="1.500 1.200"/><path d="M966.5 9.500V17L968.5 15.500L970.0 19L971.5 18.300L970.2 15L972.5 14.800z" fill="#d2d2d2"/><path d="M985 7L991 10L985 13L979 10z" fill="#d2d2d2"/><path d="M979 12.500L985 15.500L991 12.500M979 15L985 18L988 16.500" stroke="#d2d2d2" stroke-width="1.200"/><rect x="989" y="16.500" width="2.300" height="2.300" fill="#3c82dc"/><circle cx="1001.5" cy="12" r="4.800" stroke="#d2d2d2" stroke-width="1.200"/><path d="M1005.0 15.500L1008.5 19.500" stroke="#d2d2d2" stroke-width="1.600"/><rect x="999.0" y="10" width="5" height="3.500" stroke="#3c82dc" stroke-width=".9"/><rect x="1018" y="8" width="8" height="6" fill="#7db4f0" stroke="#3c82dc" stroke-width="1"/><path d="M1014.5 13V18H1021" stroke="#3c82dc" stroke-width="1.800"/><path d="M1037.5 7.500L1039.0 14L1043.0 18.500L1037.5 16.500L1032.0 18.500L1036.0 14z" fill="#d2d2d2"/><path d="M1059.300 12L1061 13.800L1062.700 12" stroke="#bdbdbd" stroke-width="1"/><path d="M1073.5 8.500L1075.0 14L1078.5 18.500L1073.5 16.500L1069.0 18.500L1072.0 14z" fill="#d2d2d2"/><path d="M1077.0 7.500L1080.5 7.500L1078.8 11.500z" fill="#f0a030"/><path d="M1090.75 8.500L1092.25 14L1095.75 18.500L1090.75 16.500L1086.25 18.500L1089.25 14z" fill="#858585"/><path d="M1094.75 8L1097.25 8L1096.05 11z" fill="#858585"/><rect x="1103.75" y="7.500" width="11" height="11.500" stroke="#d2d2d2" stroke-width="1.300"/><path d="M1103.75 11.300H1114.75M1103.75 15.200H1114.75M1108.25 7.500V19" stroke="#d2d2d2" stroke-width="1.300"/><circle cx="1158.75" cy="13" r="2.900" stroke="#d2d2d2" stroke-width="2.400"/><circle cx="1158.75" cy="13" r="4.500" stroke="#d2d2d2" stroke-width="1.600" stroke-dasharray="1.800 1.730"/><rect x="1170.75" y="12" width="7.500" height="6.500" fill="#3c82dc"/><path d="M1176.75 12V10.500A2.200 2.200 0 0 1 1181.15 10.500V11.500" stroke="#3c82dc" stroke-width="1.300"/><path d="M1193 7.500A3.800 3.800 0 0 1 1195 14.500V16.500H1191V14.500A3.800 3.800 0 0 1 1193 7.500z" fill="#f2a33a"/><path d="M1191.5 18.300H1194.5" stroke="#f2a33a" stroke-width="1.300"/><path d="M1205.0 17A6 6 0 1 1 1216.0 17" stroke="#d2d2d2" stroke-width="1.300"/><path d="M1208.0 10L1211.0 14.500" stroke="#d2d2d2" stroke-width="1.400"/><rect x="1223" y="8" width="10" height="10.500" stroke="#d2d2d2" stroke-width="1.300"/><path d="M1225.5 12V10.500H1227M1230.5 14.500V16H1229" stroke="#d2d2d2" stroke-width="1"/></svg>
<div class="t" style="left:1045.600px;top:702.500px;font-size:9.300px;color:#d4d4d4">1:1</div>
<div class="t" style="left:1238.600px;top:702.700px;font-size:9.600px;color:#c4c4c4">GstarCAD</div>
</body></html>
